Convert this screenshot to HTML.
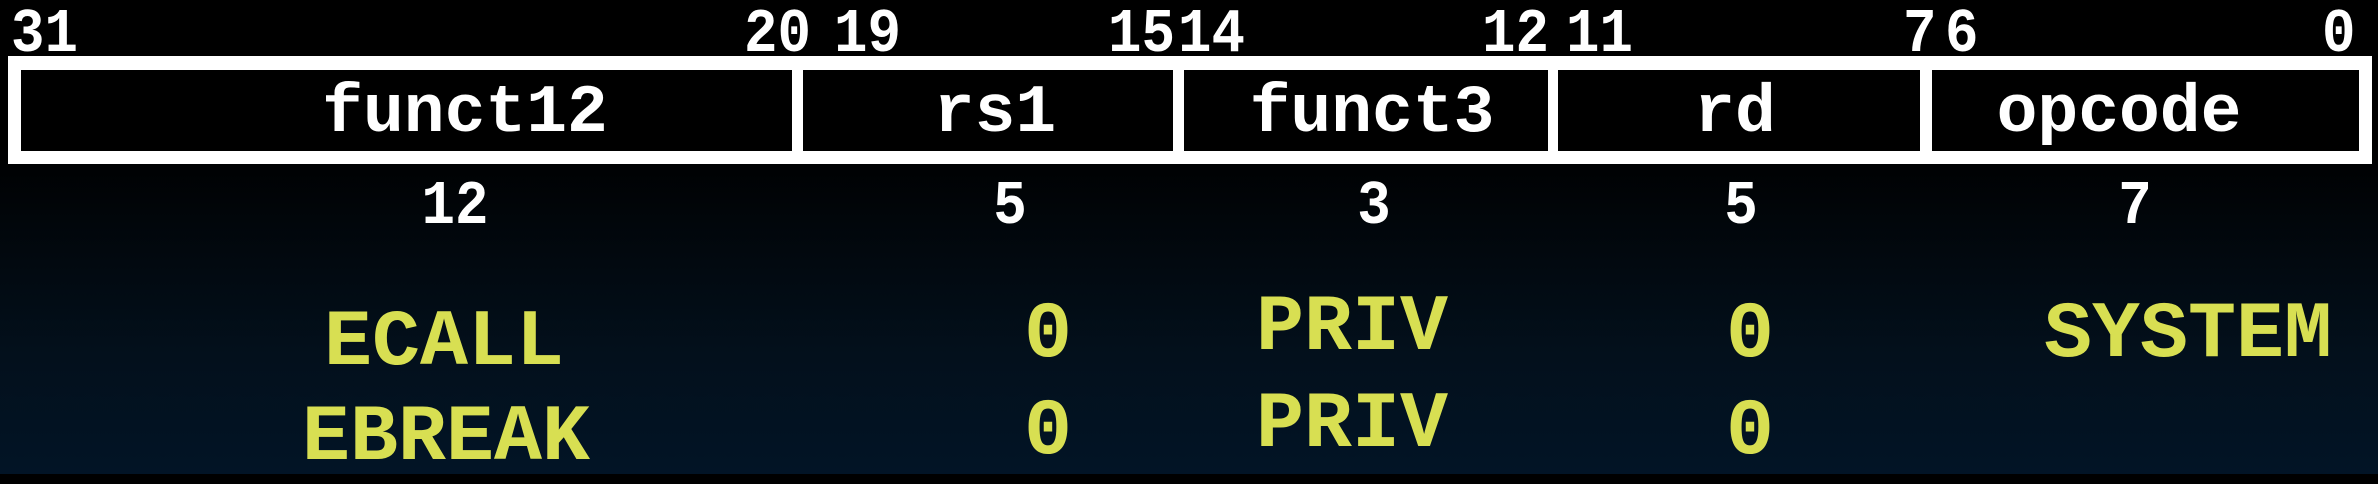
<!DOCTYPE html>
<html><head><meta charset="utf-8"><style>
html,body{margin:0;padding:0}
body{width:2378px;height:474px;overflow:hidden;position:relative;background:linear-gradient(180deg,#000 0%,#000 30%,#03101c 75%,#021426 100%);font-family:"Liberation Mono","Courier New",monospace;font-weight:bold}
.t{position:absolute;line-height:1;white-space:nowrap;color:#fff}
.c{transform:translateX(-50%)}
.n{font-size:62px;transform:scaleX(0.9);transform-origin:left}
.nc{font-size:62px;transform:translateX(-50%) scaleX(0.9)}
.l{font-size:68px;transform:translateX(-50%)}
.y{color:#d8df52;font-size:80px;transform:translateX(-50%)}
.box{position:absolute;background:#000}
</style></head><body>
<div style="position:absolute;left:8px;top:56px;width:2364px;height:108px;background:#fff"></div>
<div class="box" style="left:21px;top:70px;width:771px;height:81px"></div>
<div class="box" style="left:803px;top:70px;width:370px;height:81px"></div>
<div class="box" style="left:1184px;top:70px;width:364px;height:81px"></div>
<div class="box" style="left:1558px;top:70px;width:362px;height:81px"></div>
<div class="box" style="left:1932px;top:70px;width:427px;height:81px"></div>

<div class="t n" style="left:11px;top:4px">31</div>
<div class="t n" style="left:744px;top:4px">20</div>
<div class="t n" style="left:834px;top:4px">19</div>
<div class="t n" style="left:1108px;top:4px">15</div>
<div class="t n" style="left:1178px;top:4px">14</div>
<div class="t n" style="left:1482px;top:4px">12</div>
<div class="t n" style="left:1566px;top:4px">11</div>
<div class="t n" style="left:1903px;top:4px">7</div>
<div class="t n" style="left:1945px;top:4px">6</div>
<div class="t n" style="left:2322px;top:4px">0</div>

<div class="t l" style="left:465px;top:80px">funct12</div>
<div class="t l" style="left:995px;top:80px">rs1</div>
<div class="t l" style="left:1372px;top:80px">funct3</div>
<div class="t l" style="left:1735px;top:80px">rd</div>
<div class="t l" style="left:2119px;top:80px">opcode</div>

<div class="t nc" style="left:455px;top:176px">12</div>
<div class="t nc" style="left:1010px;top:176px">5</div>
<div class="t nc" style="left:1374px;top:176px">3</div>
<div class="t nc" style="left:1741px;top:176px">5</div>
<div class="t nc" style="left:2135px;top:176px">7</div>

<div class="t y" style="left:444px;top:304px">ECALL</div>
<div class="t y" style="left:446px;top:399px">EBREAK</div>
<div class="t y" style="left:1048px;top:296px">0</div>
<div class="t y" style="left:1048px;top:393px">0</div>
<div class="t y" style="left:1352px;top:289px">PRIV</div>
<div class="t y" style="left:1352px;top:386px">PRIV</div>
<div class="t y" style="left:1750px;top:296px">0</div>
<div class="t y" style="left:1750px;top:393px">0</div>
<div class="t y" style="left:2188px;top:296px">SYSTEM</div>
</body></html>
